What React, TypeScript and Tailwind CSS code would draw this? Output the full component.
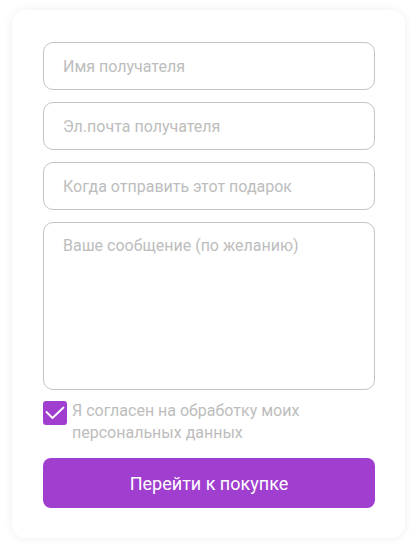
import React from 'react';

export default function App() {
  const fields = ['Имя получателя', 'Эл.почта получателя', 'Когда отправить этот подарок'];

  return (
    <div className="min-h-[553px] bg-white pt-[10px] pl-[12px] font-['Roboto',sans-serif]">
      <div className="w-[393px] h-[528px] bg-white rounded-[14px] shadow-[0_0_10px_rgba(0,0,0,0.07)] pt-[32px] pl-[31px] pr-[30px]">
        <div className="flex flex-col gap-[12px]">
          {fields.map((f) => (
            <input
              key={f}
              placeholder={f}
              className="h-[48px] w-full rounded-[10px] border border-[#c4c4c4] px-[19px] text-[16px] text-[#333] placeholder:text-[#bdbdbd] outline-none"
            />
          ))}
          <textarea
            placeholder="Ваше сообщение (по желанию)"
            className="h-[168px] w-full resize-none rounded-[10px] border border-[#c4c4c4] px-[19px] pt-[12px] text-[16px] leading-[22px] text-[#333] placeholder:text-[#bdbdbd] outline-none"
          />
        </div>

        <div className="mt-[10px] flex items-start gap-[5px]">
          <div className="mt-[1px] flex h-[24px] w-[24px] shrink-0 items-center justify-center rounded-[3px] bg-[#a03ed0]">
            <svg width="20" height="14" viewBox="0 0 20 14" fill="none">
              <path d="M1.5 6 L7.5 12 L18.5 1.5" stroke="white" strokeWidth="1.8" strokeLinecap="round" strokeLinejoin="round" />
            </svg>
          </div>
          <p className="text-[16px] leading-[22px] text-[#bdbdbd]">
            Я согласен на обработку моих
            <br />
            персональных данных
          </p>
        </div>

        <button className="mt-[14px] h-[50px] w-full rounded-[8px] bg-[#a03ed0] text-[18px] text-white">
          Перейти к покупке
        </button>
      </div>
    </div>
  );
}
